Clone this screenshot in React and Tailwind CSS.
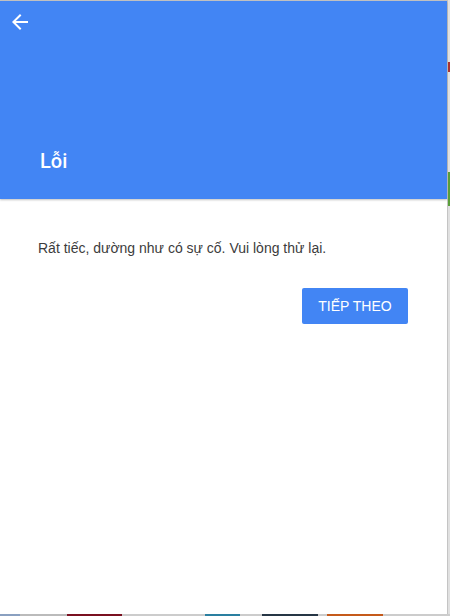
export default function App() {
  return (
    <div className="flex h-[616px] w-[450px] flex-col overflow-hidden bg-[#d9d9d9] font-['Liberation_Sans',Arial,sans-serif]">
      <div className="flex h-[614px] shrink-0">
        {/* Hộp thoại */}
        <div className="flex w-[448px] shrink-0 flex-col border-r border-t border-[#c4c4c4] bg-white">
          <div className="flex h-[198px] shrink-0 flex-col bg-[#4285f4] shadow-[0_1px_2px_rgba(0,0,0,0.25)]">
            <button className="ml-2 mt-[9px] h-6 w-6 text-white">
              <svg viewBox="0 0 24 24" width="24" height="24" fill="currentColor">
                <path d="M20 11H7.83l5.59-5.59L12 4l-8 8 8 8 1.41-1.41L7.83 13H20v-2z" />
              </svg>
            </button>
            <h1 className="ml-[40px] mt-[115px] font-['Roboto',sans-serif] text-[20px] font-medium leading-6 text-white">Lỗi</h1>
          </div>
          <p className="ml-[38px] mt-[39px] text-[14px] leading-5 text-[#3c3c3c]">
            Rất tiếc, dường như có sự cố. Vui lòng thử lại.
          </p>
          <div className="mr-[39px] mt-[30px] flex justify-end">
            <button className="h-9 w-[106px] rounded-[2px] bg-[#4285f4] text-[14px] text-white">
              TIẾP THEO
            </button>
          </div>
        </div>
        {/* nền trang phía sau */}
        <div className="flex flex-1 flex-col bg-[#e0e0e0]">
          <div className="h-[62px]" />
          <div className="h-[10px] bg-[#a33]" />
          <div className="h-[100px]" />
          <div className="h-[34px] bg-[#5a9e3a]" />
        </div>
      </div>
      <div className="flex h-[2px]">
        <div className="w-[20px] bg-[#8aa0c0]" />
        <div className="w-[47px] bg-[#bbb]" />
        <div className="w-[55px] bg-[#7a1020]" />
        <div className="w-[83px] bg-[#ccc]" />
        <div className="w-[35px] bg-[#2a7fa0]" />
        <div className="w-[22px] bg-[#ccc]" />
        <div className="w-[56px] bg-[#263645]" />
        <div className="w-[9px] bg-[#ccc]" />
        <div className="w-[56px] bg-[#c55a1a]" />
        <div className="flex-1 bg-[#ccc]" />
      </div>
    </div>
  );
}
